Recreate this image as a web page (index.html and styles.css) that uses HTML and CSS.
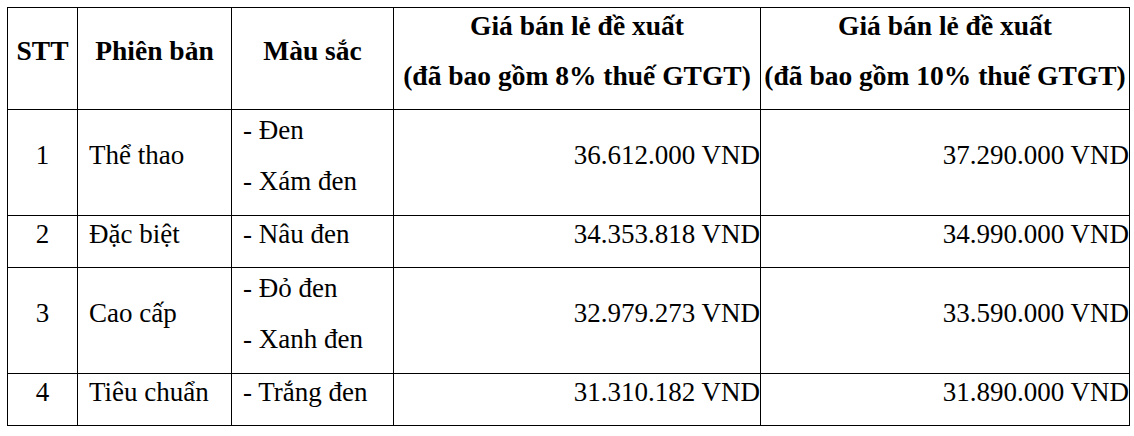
FILE: index.html
```html
<!DOCTYPE html>
<html lang="vi">
<head>
<meta charset="utf-8">
<title>Giá bán lẻ đề xuất</title>
<link rel="stylesheet" href="styles.css">
</head>
<body>
<div class="page">
<table class="price">
  <colgroup>
    <col class="c-stt">
    <col class="c-ver">
    <col class="c-col">
    <col class="c-p8">
    <col class="c-p10">
  </colgroup>
  <thead>
    <tr class="head">
      <th><p class="hl">STT</p></th>
      <th><p class="hl">Phiên bản</p></th>
      <th><p class="hl">Màu sắc</p></th>
      <th><p class="hl">Giá bán lẻ đề xuất</p><p class="hl">(đã bao gồm 8% thuế GTGT)</p></th>
      <th><p class="hl">Giá bán lẻ đề xuất</p><p class="hl">(đã bao gồm 10% thuế GTGT)</p></th>
    </tr>
  </thead>
  <tbody>
    <tr class="two">
      <td class="num"><p class="ln">1</p></td>
      <td class="txt"><p class="ln">Thể thao</p></td>
      <td class="txt"><p class="ln">- Đen</p><p class="ln">- Xám đen</p></td>
      <td class="money"><p class="ln">36.612.000 VND</p></td>
      <td class="money"><p class="ln">37.290.000 VND</p></td>
    </tr>
    <tr class="one">
      <td class="num"><p class="ln">2</p></td>
      <td class="txt"><p class="ln">Đặc biệt</p></td>
      <td class="txt"><p class="ln">- Nâu đen</p></td>
      <td class="money"><p class="ln">34.353.818 VND</p></td>
      <td class="money"><p class="ln">34.990.000 VND</p></td>
    </tr>
    <tr class="two">
      <td class="num"><p class="ln">3</p></td>
      <td class="txt"><p class="ln">Cao cấp</p></td>
      <td class="txt"><p class="ln">- Đỏ đen</p><p class="ln">- Xanh đen</p></td>
      <td class="money"><p class="ln">32.979.273 VND</p></td>
      <td class="money"><p class="ln">33.590.000 VND</p></td>
    </tr>
    <tr class="one">
      <td class="num"><p class="ln">4</p></td>
      <td class="txt"><p class="ln">Tiêu chuẩn</p></td>
      <td class="txt"><p class="ln">- Trắng đen</p></td>
      <td class="money"><p class="ln">31.310.182 VND</p></td>
      <td class="money"><p class="ln">31.890.000 VND</p></td>
    </tr>
  </tbody>
</table>
</div>
</body>
</html>
```

FILE: styles.css
```css
html, body {
  margin: 0;
  padding: 0;
  background: #ffffff;
}

body {
  font-family: "Liberation Serif", "DejaVu Serif", serif;
  color: #000000;
  font-size: 27px;
}

.page {
  padding: 7px 0 0 7px;
}

.price {
  border-collapse: collapse;
  table-layout: fixed;
  width: 1122px;
}

.c-stt { width: 70px; }
.c-ver { width: 154px; }
.c-col { width: 162px; }
.c-p8 { width: 367px; }
.c-p10 { width: 369px; }

.price th,
.price td {
  border: 1px solid #000000;
  padding: 0;
  vertical-align: middle;
  font-family: "Liberation Serif", "DejaVu Serif", serif;
}

.price th {
  font-weight: 700;
  font-size: 27.5px;
  text-align: center;
  white-space: nowrap;
}

.price td {
  font-weight: 400;
  font-size: 27px;
}

.hl {
  margin: 0 0 16px 0;
  line-height: 34px;
}

.ln {
  margin: 0 0 14px 0;
  line-height: 37px;
  white-space: nowrap;
}

.head { height: 102px; }
.two { height: 106px; }
.one { height: 52px; }

.price .num { text-align: center; }
.price .txt { text-align: left; padding-left: 11px; }
.price .money { text-align: right; padding-right: 0; }
```
